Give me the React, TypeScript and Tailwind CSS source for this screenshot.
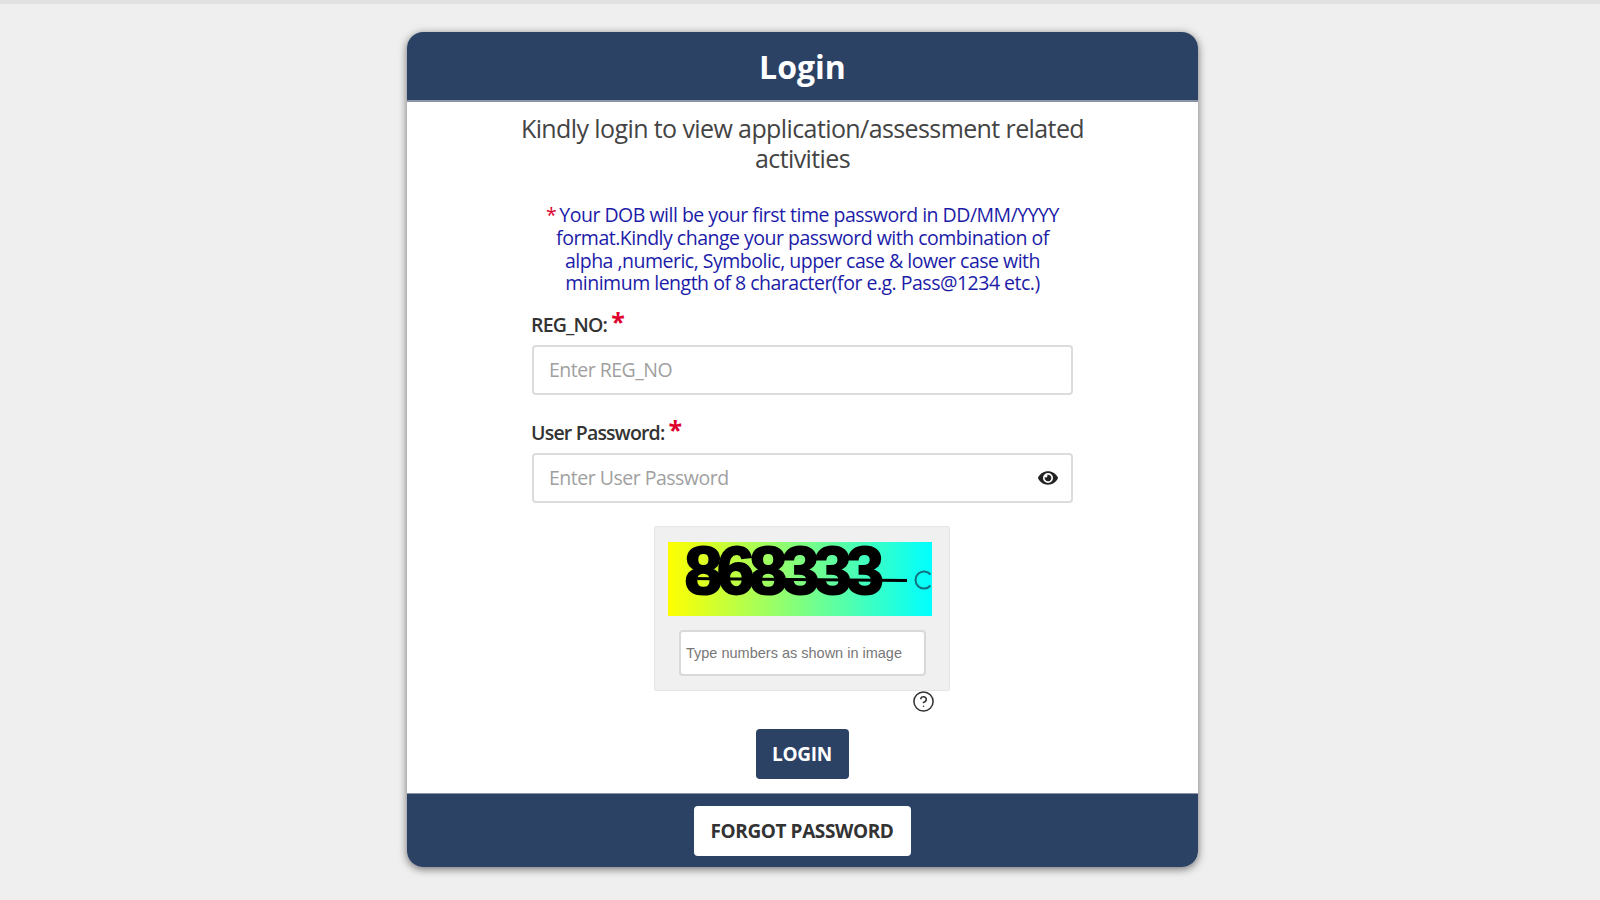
import { CircleHelp } from 'lucide-react';
import { FaEye } from 'react-icons/fa';

function Required() {
  return <span className="ml-[4px] relative top-[-3px] text-[25px] leading-none font-bold text-[#e0002d]">*</span>;
}

export default function App() {
  return (
    <div className="h-[900px] overflow-hidden bg-[#efefef] font-['Open_Sans',sans-serif]">
      <div className="h-1 bg-[#e1e1e1]" />
      <div className="ml-[407px] mt-7 flex h-[835px] w-[791px] flex-col rounded-[16px] bg-white shadow-[0_2px_8px_rgba(0,0,0,0.55)]">
        {/* Header */}
        <div className="flex h-[70px] items-center justify-center rounded-t-[16px] border-b-2 border-[#8a94a3] bg-[#2c4265] pt-[2px]">
          <h1 className="text-[32px] font-bold text-white">Login</h1>
        </div>

        {/* Body */}
        <div className="flex flex-1 flex-col items-center">
          <p className="mt-[12px] w-[600px] text-center text-[25px] leading-[29.5px] tracking-[-0.6px] text-[#444444]">
            Kindly login to view application/assessment related activities
          </p>

          <p className="mt-[31px] w-[540px] text-center text-[19.5px] leading-[22.8px] tracking-[-0.5px] text-[#1c1ca8]">
            <span className="mr-[3px] text-[#e0002d]">*</span>Your DOB will be your first time password in DD/MM/YYYY format.Kindly change your password with combination of alpha ,numeric, Symbolic, upper case &amp; lower case with minimum length of 8 character(for e.g. Pass@1234 etc.)
          </p>

          <div className="mt-[11px] w-[541px]">
            <label className="-ml-px flex h-[36px] items-center text-[19.5px] font-semibold tracking-[-0.8px] text-[#333333]">
              REG_NO:<Required />
            </label>
            <input
              placeholder="Enter REG_NO"
              className="mt-[3px] h-[50px] w-full rounded-[4px] border-2 border-[#dcdcdc] px-[15px] pb-[2px] text-[19.5px] tracking-[-0.5px] placeholder:text-[#a0a0a0]"
            />

            <label className="-ml-px mt-[19px] flex h-[36px] items-center text-[19.5px] font-semibold tracking-[-0.8px] text-[#333333]">
              User Password:<Required />
            </label>
            <div className="relative mt-[3px]">
              <input
                placeholder="Enter User Password"
                className="h-[50px] w-full rounded-[4px] border-2 border-[#dcdcdc] px-[15px] pb-[2px] text-[19.5px] tracking-[-0.5px] placeholder:text-[#a0a0a0]"
              />
              <FaEye className="absolute right-[15px] top-[15px] h-[20px] w-[20px] text-[#222222]" />
            </div>
          </div>

          {/* Captcha */}
          <div className="mr-[2px] mt-[23px] flex h-[165px] w-[296px] flex-col items-center rounded-[2px] border border-[#e6e6e6] bg-[#f0f0f0]">
            <div className="relative mr-[4px] mt-[15px] h-[74px] w-[264px] bg-[linear-gradient(to_right,#ffff00,#00ffff)]">
              <span className="absolute left-[17px] top-[-9px] font-['Liberation_Sans',sans-serif] text-[68px] leading-[74px] font-bold tracking-[-5.5px] text-black [-webkit-text-stroke:2px_black]">
                868333
              </span>
              <div className="absolute left-[18px] top-[36px] h-[3px] w-[221px] rotate-[0.5deg] bg-black" />
              <svg viewBox="0 0 22 22" className="absolute right-[-2px] top-[27px] h-[22px] w-[22px]" fill="none" stroke="#13707f" strokeWidth="2">
                <path d="M18.5 5.5A8.5 8.5 0 1 0 18.5 16.5" />
              </svg>
            </div>
            <input
              placeholder="Type numbers as shown in image"
              className="ml-[2px] mt-[14px] h-[46px] w-[247px] rounded-[4px] border-2 border-[#d9d9d9] bg-white px-[5px] font-['Liberation_Sans',sans-serif] text-[14.5px] placeholder:text-[#777777]"
            />
          </div>

          <div className="flex w-[296px] justify-end pr-[16px]">
            <CircleHelp className="mt-[-1px] h-[23px] w-[23px] text-[#333333]" strokeWidth={1.6} />
          </div>

          <button className="mt-[16px] mr-px h-[50px] w-[93px] rounded-[4px] bg-[#2c4265] text-[19px] font-bold tracking-[-0.3px] text-white">
            LOGIN
          </button>
        </div>

        {/* Footer */}
        <div className="flex h-[74px] justify-center rounded-b-[16px] border-t border-[#8a94a3] bg-[#2c4265] pt-[12px]">
          <button className="mr-px h-[50px] w-[217px] rounded-[4px] bg-white text-[19px] font-bold tracking-[-0.4px] text-[#333333]">
            FORGOT PASSWORD
          </button>
        </div>
      </div>
    </div>
  );
}
